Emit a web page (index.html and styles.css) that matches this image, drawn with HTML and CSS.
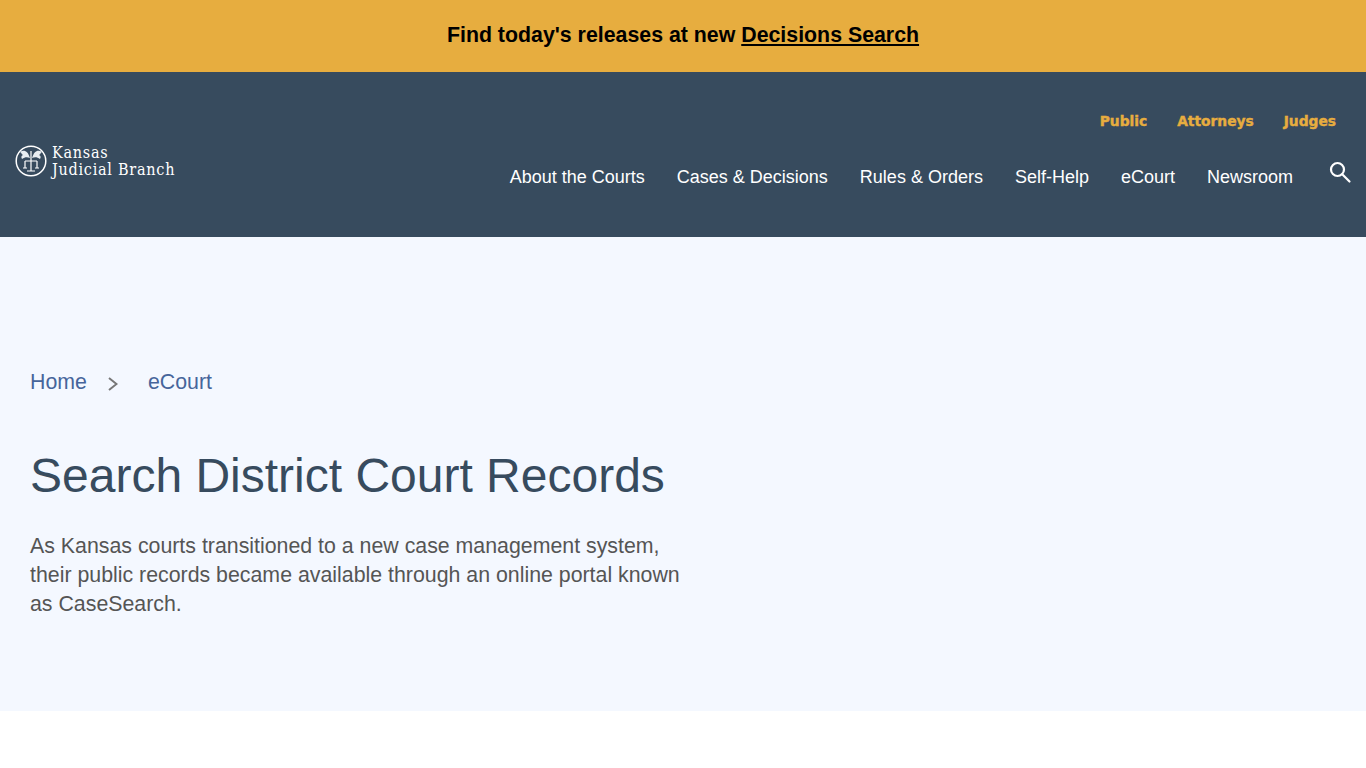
FILE: index.html
```html
<!DOCTYPE html>
<html lang="en">
<head>
  <meta charset="UTF-8">
  <meta name="viewport" content="width=device-width, initial-scale=1.0">
  <title>Search District Court Records</title>
  <link rel="stylesheet" href="styles.css">
</head>
<body>
  <div class="banner">
    <p>Find today's releases at new <a href="#">Decisions Search</a></p>
  </div>

  <header class="header">
    <a class="logo" href="#">
      <svg class="seal" width="32" height="32" viewBox="0 0 32 32" fill="none" stroke="#fff">
        <circle cx="16" cy="16" r="14.8" stroke-width="1.5"/>
        <path d="M15 13C13 6 9 4 5 7c2 1 1 2 3 3-2 1-2 2-1 4 3-2 5-2 8-1z" fill="#e8edf1" stroke="none"/>
        <path d="M17 13c2-7 6-9 10-6-2 1-1 2-3 3 2 1 2 2 1 4-3-2-5-2-8-1z" fill="#e8edf1" stroke="none"/>
        <path d="M16 6v20M10 16h12M10 16v7M22 16v7M12 26h8M8 23h4M20 23h4" stroke-width="1.2"/>
      </svg>
      <span class="logo-text">Kansas<br>Judicial Branch</span>
    </a>
    <div class="header-right">
      <nav class="audience-nav">
        <a href="#">Public</a>
        <a href="#">Attorneys</a>
        <a href="#">Judges</a>
      </nav>
      <div class="main-row">
        <nav class="main-nav">
          <a href="#">About the Courts</a>
          <a href="#">Cases &amp; Decisions</a>
          <a href="#">Rules &amp; Orders</a>
          <a href="#">Self-Help</a>
          <a href="#">eCourt</a>
          <a href="#">Newsroom</a>
        </nav>
        <svg class="search-icon" width="24" height="24" viewBox="0 0 24 24" fill="none" stroke="#fff" stroke-width="2.2">
          <circle cx="9.5" cy="9.5" r="6.5"/>
          <path d="M14.2 14.2L21.5 21.5" stroke-linecap="round"/>
        </svg>
      </div>
    </div>
  </header>

  <main class="hero">
    <div class="breadcrumbs">
      <a href="#">Home</a>
      <svg width="10" height="14" viewBox="0 0 10 14" fill="none" stroke="#777" stroke-width="2">
        <path d="M1 1l7.5 6L1 13"/>
      </svg>
      <a href="#">eCourt</a>
    </div>
    <h1>Search District Court Records</h1>
    <p class="intro">As Kansas courts transitioned to a new case management system, their public records became available through an online portal known as CaseSearch.</p>
  </main>
</body>
</html>
```

FILE: styles.css
```css
body {
  margin: 0;
  font-family: "Liberation Sans", Arial, sans-serif;
  background-color: #fff;
}

a {
  text-decoration: none;
}

.banner {
  height: 72px;
  display: flex;
  align-items: center;
  justify-content: center;
  background-color: #e7ad3f;
}

.banner p {
  margin: 0 0 2px;
  font-size: 21.33px;
  font-weight: bold;
  color: #000;
}

.banner a {
  color: #000;
  text-decoration: underline;
}

.header {
  height: 165px;
  box-sizing: border-box;
  display: flex;
  justify-content: space-between;
  background-color: #374b5e;
}

.logo {
  display: flex;
  align-items: center;
  gap: 5px;
  margin-left: 15px;
  margin-top: 13px;
  color: #fff;
}

.logo-text {
  font-family: "DejaVu Serif", "Liberation Serif", serif;
  font-stretch: condensed;
  font-size: 16px;
  line-height: 17px;
  letter-spacing: 0.75px;
}

.header-right {
  display: flex;
  flex-direction: column;
  align-items: flex-end;
  padding: 41px 14px 0 0;
}

.audience-nav {
  display: flex;
  gap: 30px;
  padding-right: 16px;
}

.audience-nav a {
  font-family: "DejaVu Sans", sans-serif;
  font-size: 13.8px;
  line-height: 16px;
  font-weight: bold;
  color: #e7ad3f;
  -webkit-text-stroke: 0.4px #e7ad3f;
}

.main-row {
  display: flex;
  align-items: flex-start;
  gap: 36px;
  margin-top: 37px;
}

.main-nav {
  display: flex;
  gap: 32px;
  margin-left: 1px;
}

.main-nav a {
  font-size: 18px;
  line-height: 22px;
  color: #fff;
}

.search-icon {
  margin-top: -6px;
  margin-left: -1px;
}

.hero {
  height: 474px;
  box-sizing: border-box;
  padding: 133px 30px 0;
  background-color: #f4f8ff;
}

.breadcrumbs {
  display: flex;
  align-items: center;
  font-size: 21.33px;
  line-height: 24px;
}

.breadcrumbs a {
  color: #46659b;
}

.breadcrumbs svg {
  margin: 3px 30px 0 21px;
}

h1 {
  margin: 53px 0 0;
  font-size: 48px;
  line-height: 58px;
  font-weight: normal;
  color: #374b5e;
}

.intro {
  margin: 27px 0 0;
  width: 670px;
  font-size: 21.33px;
  line-height: 29px;
  color: #555;
}
```
